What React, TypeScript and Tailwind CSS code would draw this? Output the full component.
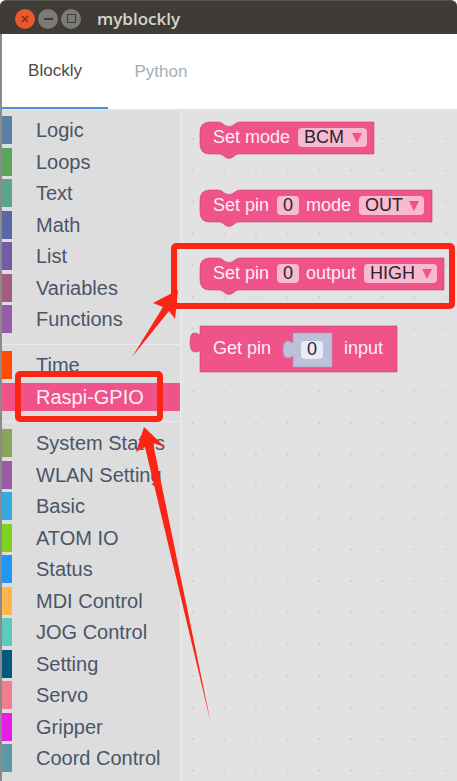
import React from 'react';

const sans = "font-['Liberation_Sans',Arial,sans-serif]";

type Row = { label: string; color: string };

const groupOne: Row[] = [
  { label: 'Logic', color: 'bg-[#5b80a5]' },
  { label: 'Loops', color: 'bg-[#5ba55b]' },
  { label: 'Text', color: 'bg-[#5ba58c]' },
  { label: 'Math', color: 'bg-[#5b67a5]' },
  { label: 'List', color: 'bg-[#745ba5]' },
  { label: 'Variables', color: 'bg-[#a55b80]' },
  { label: 'Functions', color: 'bg-[#995ba5]' },
];

const groupThree: Row[] = [
  { label: 'System Status', color: 'bg-[#8aa55b]' },
  { label: 'WLAN Setting', color: 'bg-[#995ba5]' },
  { label: 'Basic', color: 'bg-[#36a9e0]' },
  { label: 'ATOM IO', color: 'bg-[#7ed321]' },
  { label: 'Status', color: 'bg-[#2196f3]' },
  { label: 'MDI Control', color: 'bg-[#ffb74d]' },
  { label: 'JOG Control', color: 'bg-[#5ec9bd]' },
  { label: 'Setting', color: 'bg-[#01587a]' },
  { label: 'Servo', color: 'bg-[#f27d8e]' },
  { label: 'Gripper', color: 'bg-[#e91ee6]' },
  { label: 'Coord Control', color: 'bg-[#5b9aa5]' },
];

const ToolboxRow = ({ label, color, active }: Row & { active?: boolean }) => (
  <div className={`mb-[3.5px] flex h-[28px] items-center ${active ? 'bg-[#f0538a] text-[#fdeef4]' : 'text-[#4a5568]'}`}>
    <div className={`h-[28px] w-[10px] ${color}`} />
    <span className="ml-6 whitespace-nowrap text-[20px] leading-none">{label}</span>
  </div>
);

const fieldText = { fontFamily: 'Liberation Sans, Arial, sans-serif', fontSize: 18 };

const StackBlock = ({ top, width, children }: { top: number; width: number; children: React.ReactNode }) => (
  <svg className="absolute left-[195px]" style={{ top }} width={width + 10} height={44}>
    <path
      d={`M5 14 q0 -10 10 -10 h8 q3 0 5 2 q6 5 12 0 q2 -2 5 -2 H${width + 5} V36 H43 q-3 1 -5 3 q-4 3 -8 0 q-2 -2 -5 -3 H15 q-10 0 -10 -10 Z`}
      fill="#f0538a"
      stroke="#c9406f"
      strokeWidth="0.6"
    />
    {children}
  </svg>
);

const Label = ({ x, y, children }: { x: number; y: number; children: string }) => (
  <text x={x} y={y} fill="#fdeef4" style={fieldText}>{children}</text>
);

const Field = ({ x, w, y, label, arrow }: { x: number; w: number; y: number; label: string; arrow?: boolean }) => (
  <g>
    <rect x={x} y={y - 15} width={w} height={19} rx="4" fill="#f9b9cf" />
    <text x={x + (arrow ? 6 : w / 2)} y={y} fill="#2a2433" textAnchor={arrow ? 'start' : 'middle'} style={fieldText}>{label}</text>
    {arrow && <path d={`M${x + w - 15} ${y - 10} h10 l-5 10 Z`} fill="#f0538a" />}
  </g>
);

const App = () => (
  <div className={`relative h-[781px] w-[457px] overflow-hidden bg-white ${sans}`}>
    {/* title bar */}
    <div className="flex h-[34px] items-center rounded-t-[6px] border-t border-[#56534d] bg-[#3f3c37] pl-[15px] pt-[2px]">
      <div className="flex h-5 w-5 items-center justify-center rounded-full bg-[#e9592c] text-[#7a2a12]">
        <svg width="8" height="8" viewBox="0 0 8 8"><path d="M1 1l6 6M7 1l-6 6" stroke="currentColor" strokeWidth="1.3" /></svg>
      </div>
      <div className="ml-[3px] flex h-5 w-5 items-center justify-center rounded-full bg-[#7b7a74]">
        <div className="h-[2px] w-[9px] bg-[#3f3c37]" />
      </div>
      <div className="ml-[3px] flex h-5 w-5 items-center justify-center rounded-full bg-[#7b7a74]">
        <div className="h-[9px] w-[9px] border-[1.5px] border-[#3f3c37]" />
      </div>
      <span className="ml-[16px] font-['Open_Sans',sans-serif] text-[17px] font-semibold text-[#d8d4cc]">myblockly</span>
    </div>

    <div className="flex h-[747px] flex-col border-l-2 border-[#8b8b8b]">
      {/* tabs */}
      <div className="flex h-[76px] shrink-0 border-b border-[#e4e4e4] bg-white text-[17px]">
        <div className="flex w-[106px] items-center justify-center border-b-2 border-[#4a90e2] text-[#4a4a4a]">Blockly</div>
        <div className="flex w-[106px] items-center justify-center text-[#a5adb8]">Python</div>
      </div>

      <div className="flex min-h-0 flex-1">
        {/* toolbox */}
        <div className="w-[178px] shrink-0 bg-[#dddddd] pt-[6px]">
          {groupOne.map((r) => <ToolboxRow key={r.label} {...r} />)}
          <div className="mb-[6.5px] mt-[10.5px] h-px bg-[#ebebeb]" />
          <ToolboxRow label="Time" color="bg-[#ff4d00]" />
          <ToolboxRow label="Raspi-GPIO" color="bg-[#f0538a]" active />
          <div className="mb-[7.5px] mt-[10px] h-px bg-[#ebebeb]" />
          {groupThree.map((r) => <ToolboxRow key={r.label} {...r} />)}
        </div>
        {/* workspace */}
        <div className="flex-1 border-l border-[#ececec] bg-[#e2e2e2] bg-[radial-gradient(circle,#cfcfcf_1px,transparent_1.5px)] bg-[size:31.6px_31.6px] bg-[position:-4px_13px]" />
      </div>
    </div>

    {/* blocks on the workspace */}
    <StackBlock top={118} width={174}>
      <Label x={18} y={25}>Set mode</Label>
      <Field x={103} w={69} y={25} label="BCM" arrow />
    </StackBlock>
    <StackBlock top={186} width={232}>
      <Label x={18} y={25}>Set pin</Label>
      <Field x={82} w={22} y={25} label="0" />
      <Label x={111} y={25}>mode</Label>
      <Field x={164} w={65} y={25} label="OUT" arrow />
    </StackBlock>
    <StackBlock top={254} width={244}>
      <Label x={18} y={25}>Set pin</Label>
      <Field x={82} w={22} y={25} label="0" />
      <Label x={111} y={25}>output</Label>
      <Field x={169} w={73} y={25} label="HIGH" arrow />
    </StackBlock>
    <svg className="absolute left-[185px] top-[320px]" width={220} height={60}>
      <path d="M15 6 H212 V52 H15 V31 q-3 1 -6 1 q-4 -1 -4 -10 q0 -9 4 -9 q3 0 6 2 Z" fill="#f0538a" stroke="#c9406f" strokeWidth="0.6" />
      <path d="M108 13 H147 V47 H108 V36 q-3 2 -5 2 q-5 0 -5 -8.5 q0 -8.5 5 -8.5 q2 0 5 2 Z" fill="#bcc0d8" stroke="#9ca0bd" strokeWidth="0.6" />
      <rect x={116} y={21} width={22} height={18} rx="4" fill="#e8ebf4" />
      <Label x={28} y={34}>Get pin</Label>
      <text x={127} y={35} fill="#2a2433" textAnchor="middle" style={fieldText}>0</text>
      <Label x={159} y={34}>input</Label>
    </svg>

    {/* red annotations */}
    <div className="absolute left-[171px] top-[243px] h-[66px] w-[284px] rounded-[5px] border-[6px] border-[#fb2516]" />
    <div className="absolute left-[15px] top-[371px] h-[51px] w-[148px] rounded-[5px] border-[6px] border-[#fb2516]" />
    <svg className="pointer-events-none absolute left-0 top-0" width="457" height="781">
      <path d="M132 357 L163 307 L153 303 L178 290 L175 319 L169 311 Z" fill="#fb2516" />
      <path d="M211 724 L153 443 L165 447 L144 427 L136 452 L145 447 Z" fill="#fb2516" />
    </svg>
  </div>
);

export default App;
